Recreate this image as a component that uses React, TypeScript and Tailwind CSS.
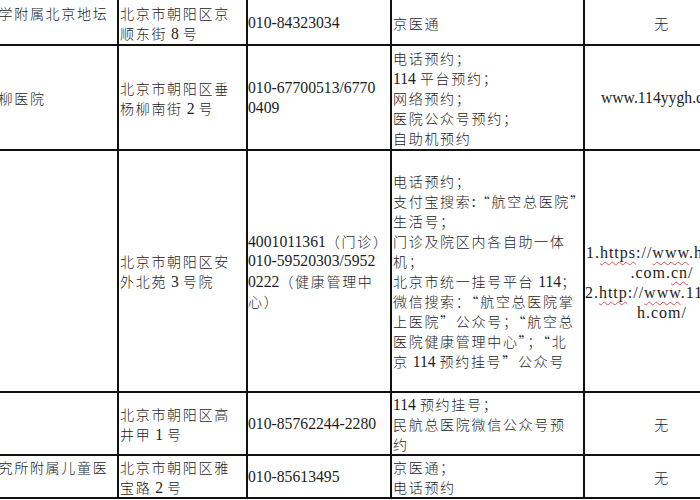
import type { ReactNode } from "react";

// CJK runs get their own font + spacing so they keep the 15.7px pitch of the scan
const CJK = /([\u2e80-\u9fff\u3000-\u303f\uff00-\uffef“”]+)/;

function Line({ text }: { text: string }) {
  const parts = text.split(CJK);
  return (
    <div className="h-[20px] whitespace-nowrap leading-[20px]">
      {parts.map((part, i) =>
        i % 2 === 1 ? (
          <span
            key={i}
            className="font-['Noto_Sans_CJK_SC',sans-serif] text-[14px] font-light tracking-[1.7px]"
          >
            {part}
          </span>
        ) : (
          <span key={i}>{part}</span>
        )
      )}
    </div>
  );
}

const wavy =
  "underline decoration-wavy decoration-[#d9534f] decoration-1 underline-offset-[3px]";

function UrlLine({ children }: { children: ReactNode }) {
  return (
    <div className="h-[20px] whitespace-nowrap text-[16px] leading-[20px] tracking-[1px]">
      {children}
    </div>
  );
}

const rows: string[][][] = [
  [
    ["首都医科大学附属北京地坛", "医院"],
    ["北京市朝阳区京", "顺东街 8 号"],
    ["010-84323034"],
    ["京医通"],
    ["无"],
  ],
  [
    ["北京市垂杨柳医院"],
    ["北京市朝阳区垂", "杨柳南街 2 号"],
    ["010-67700513/6770", "0409"],
    ["电话预约；", "114 平台预约；", "网络预约；", "医院公众号预约；", "自助机预约"],
    ["www.114yygh.com"],
  ],
  [
    ["航空总医院"],
    ["北京市朝阳区安", "外北苑 3 号院"],
    ["4001011361（门诊）", "010-59520303/5952", "0222（健康管理中", "心）"],
    [
      "电话预约；",
      "支付宝搜索:“航空总医院”",
      "生活号；",
      "门诊及院区内各自助一体",
      "机；",
      "北京市统一挂号平台 114；",
      "微信搜索：“航空总医院掌",
      "上医院”公众号；“航空总",
      "医院健康管理中心”；“北",
      "京 114 预约挂号”公众号",
    ],
    [],
  ],
  [
    ["民航总医院"],
    ["北京市朝阳区高", "井甲 1 号"],
    ["010-85762244-2280"],
    ["114 预约挂号；", "民航总医院微信公众号预", "约"],
    ["无"],
  ],
  [
    ["首都儿科研究所附属儿童医", "院"],
    ["北京市朝阳区雅", "宝路 2 号"],
    ["010-85613495"],
    ["京医通；", "电话预约"],
    ["无"],
  ],
];

const colPad = ["pl-[3px]", "pl-[1px]", "pl-0", "pl-[1px]", "items-center"];

function HangkongUrls() {
  return (
    <div className="flex h-full flex-col items-center justify-center overflow-hidden bg-white pt-[24px]">
      <UrlLine>
        1.<span className={wavy}>https</span>://<span className={wavy}>www</span>.hkzyy
      </UrlLine>
      <UrlLine>
        .com.<span className={wavy}>cn</span>/
      </UrlLine>
      <UrlLine>
        2.<span className={wavy}>http</span>://<span className={wavy}>www</span>.114yyg
      </UrlLine>
      <UrlLine>h.com/</UrlLine>
    </div>
  );
}

export default function App() {
  return (
    <div className="h-[500px] w-[700px] overflow-hidden bg-white text-[#1c1c1c]">
      <div className="-ml-[85px] -mt-[4px] grid w-max grid-cols-[200px_127px_142px_191px_154px] grid-rows-[46px_103px_240px_61px_41px] gap-[2px] bg-[#111] p-[2px] font-['Liberation_Serif','Noto_Sans_CJK_SC',serif] text-[15.7px]">
        {rows.map((cells, r) =>
          cells.map((lines, c) =>
            r === 2 && c === 4 ? (
              <HangkongUrls key={`${r}-${c}`} />
            ) : (
              <div
                key={`${r}-${c}`}
                className={`flex flex-col justify-center overflow-hidden bg-white ${colPad[c]} ${
                  r === 0 ? "pt-[4px]" : ""
                }`}
              >
                {lines.map((line) => (
                  <Line key={line} text={line} />
                ))}
              </div>
            )
          )
        )}
      </div>
    </div>
  );
}
